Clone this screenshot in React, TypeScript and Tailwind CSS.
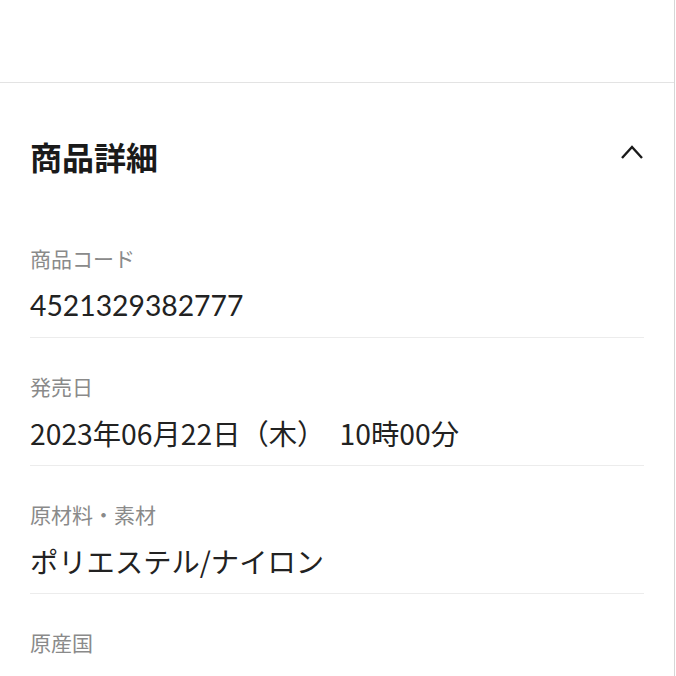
const rows = [
  { label: "商品コード", value: "4521329382777", latin: true },
  { label: "発売日", value: "2023年06月22日（木）　10時00分" },
  { label: "原材料・素材", value: "ポリエステル/ナイロン" },
  { label: "原産国", value: "中国" },
];

const App = () => {
  return (
    <div
      className="w-[675px] min-h-[676px] bg-white border-r border-[#d6d6d6] overflow-hidden"
      style={{ fontFamily: '"Noto Sans CJK JP", "Noto Sans", sans-serif' }}
    >
      {/* Header spacer */}
      <div className="h-[83px] border-b border-[#e3e3e3]" />

      <section className="px-[30px]">
        <div className="flex items-center justify-between pt-[53px] pb-[34px]">
          <h2 className="text-[32px] leading-[40px] font-bold text-[#1a1a1a]">商品詳細</h2>
          <svg width="24" height="16" viewBox="0 0 24 16" fill="none" className="mb-[8px]">
            <path d="M2 14L12 3L22 14" stroke="#1a1a1a" strokeWidth="2.4" />
          </svg>
        </div>

        {rows.map((row) => (
          <div key={row.label} className="pt-[33px] pb-[12px] border-b border-[#ececec]">
            <div className="text-[21px] leading-[30px] text-[#8a8a8a]">{row.label}</div>
            <div
              className={
                row.latin
                  ? "mt-[12px] text-[28.3px] leading-[40px] text-[#222] font-['Lato','Noto_Sans_CJK_JP',sans-serif]"
                  : "mt-[12px] text-[28.3px] leading-[40px] text-[#222]"
              }
            >
              {row.value}
            </div>
          </div>
        ))}
      </section>
    </div>
  );
};

export default App;
